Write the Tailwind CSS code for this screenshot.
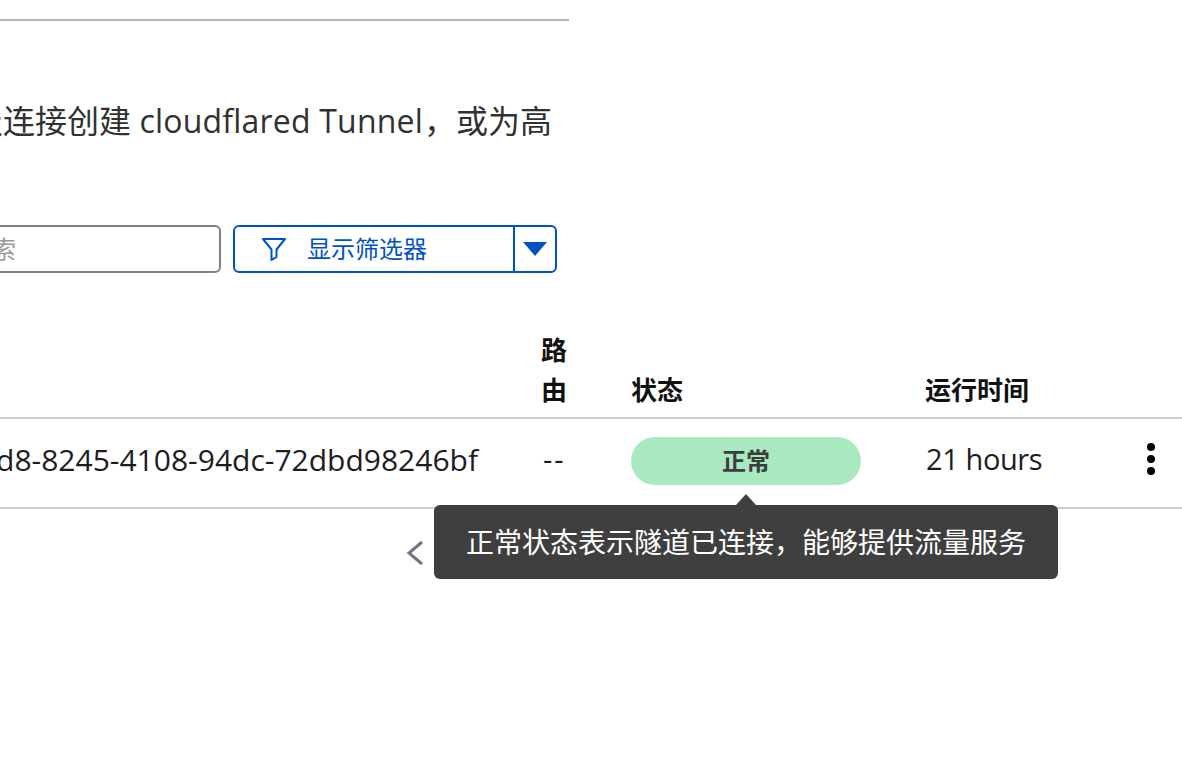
<!DOCTYPE html>
<html lang="zh-CN">
<head>
    <meta charset="UTF-8">
    <meta name="viewport" content="width=device-width, initial-scale=1.0">
    <title>Tunnels</title>
    <script src="https://cdn.jsdelivr.net/npm/@tailwindcss/browser@4"></script>
</head>
<body class="bg-white text-[#1d1d1d] font-['Open_Sans','Noto_Sans_CJK_SC',sans-serif] overflow-hidden">
    <div class="relative w-[1182px] h-[762px] overflow-hidden">

        <!-- Intro + toolbar -->
        <div class="w-[569px] pt-[19px]">
            <div class="h-[2px] bg-[#b5b5b5]"></div>
            <div class="mt-[76px] h-[48px] pr-[17px] flex justify-end items-center whitespace-nowrap text-[32px] leading-[48px] text-[#313131]">
                <span>为轻量级连接创建 <span class="tracking-[0.2px] mr-[1px]">cloudflared Tunnel</span>，或为高</span>
            </div>
            <div class="mt-[80px] pr-[12px] flex justify-end gap-[12px] h-[48px]">
                <div class="w-[300px] shrink-0 border-2 border-[#808080] rounded-[6px] flex items-center justify-end pr-[203px] text-[24px] text-[#9a9a9a] whitespace-nowrap overflow-hidden">搜索</div>
                <div class="w-[324px] shrink-0 border-2 border-[#0051c3] rounded-[6px] flex text-[#0051c3]">
                    <div class="flex-1 flex items-center pl-[26px] gap-[20px] text-[24px]">
                        <svg class="w-[26px] h-[26px]" viewBox="0 0 26 26" fill="none" stroke="#0051c3" stroke-width="2" stroke-linejoin="round"><path d="M2 3h22l-8.500 10.500v7.500l-5 3v-10.500z"/></svg>
                        <span>显示筛选器</span>
                    </div>
                    <div class="w-[42px] border-l-2 border-[#0051c3] flex items-center justify-center">
                        <svg class="w-[24px] h-[14px]" viewBox="0 0 24 14" fill="#0051c3"><path d="M0 0h24l-12 14z"/></svg>
                    </div>
                </div>
            </div>
        </div>

        <!-- Table -->
        <div class="mt-[57px] grid grid-cols-[541px_90px_294px_1fr] text-[29px]">
            <div class="border-b-2 border-[#cccccc]"></div>
            <div class="border-b-2 border-[#cccccc] pb-[7px] w-[26px] box-content pr-[64px] text-[26px] leading-[40px] font-bold text-[#111111]">路由</div>
            <div class="border-b-2 border-[#cccccc] pb-[7px] flex items-end text-[26px] leading-[40px] font-bold text-[#111111]">状态</div>
            <div class="border-b-2 border-[#cccccc] pb-[7px] flex items-end text-[26px] leading-[40px] font-bold text-[#111111]">运行时间</div>

            <div class="h-[90px] pb-[8px] border-b-2 border-[#cccccc] flex items-center justify-end pr-[63px] whitespace-nowrap overflow-hidden">
                <span class="text-[30px] text-[#1d1d1d]">c14f2ed8-8245-4108-94dc-72dbd98246bf</span>
            </div>
            <div class="h-[90px] pb-[8px] pl-[2px] border-b-2 border-[#cccccc] flex items-center tracking-[2px]">--</div>
            <div class="h-[90px] pb-[4px] border-b-2 border-[#cccccc] flex items-center">
                <div class="w-[230px] h-[48px] rounded-full bg-[#a9e9c0] flex items-center justify-center text-[24px] font-bold text-[#3d3d3d]">正常</div>
            </div>
            <div class="h-[90px] pb-[8px] pl-[1px] border-b-2 border-[#cccccc] flex items-center justify-between pr-[25px]">
                <span class="tracking-[-0.4px]">21 hours</span>
                <svg class="w-[12px] h-[34px]" viewBox="0 0 12 34" fill="#000000"><circle cx="6" cy="5" r="4"/><circle cx="6" cy="17" r="4"/><circle cx="6" cy="29" r="4"/></svg>
            </div>
        </div>

        <!-- Pagination -->
        <div class="mt-[31px] pl-[406px]">
            <svg class="w-[19px] h-[28px]" viewBox="0 0 19 28" fill="none" stroke="#6f7780" stroke-width="3"><path d="M16 2L3 13l13 11"/></svg>
        </div>

        <!-- Tooltip -->
        <div class="absolute left-[434px] top-[505px] w-[624px] h-[74px] bg-[#3f3f3f] rounded-[6px] flex items-center justify-center text-[28px] text-white whitespace-nowrap">
            正常状态表示隧道已连接，能够提供流量服务
            <div class="absolute left-[302px] -top-[11px] w-0 h-0 border-x-[10px] border-x-transparent border-b-[11px] border-b-[#3f3f3f]"></div>
        </div>
    </div>
</body>
</html>
